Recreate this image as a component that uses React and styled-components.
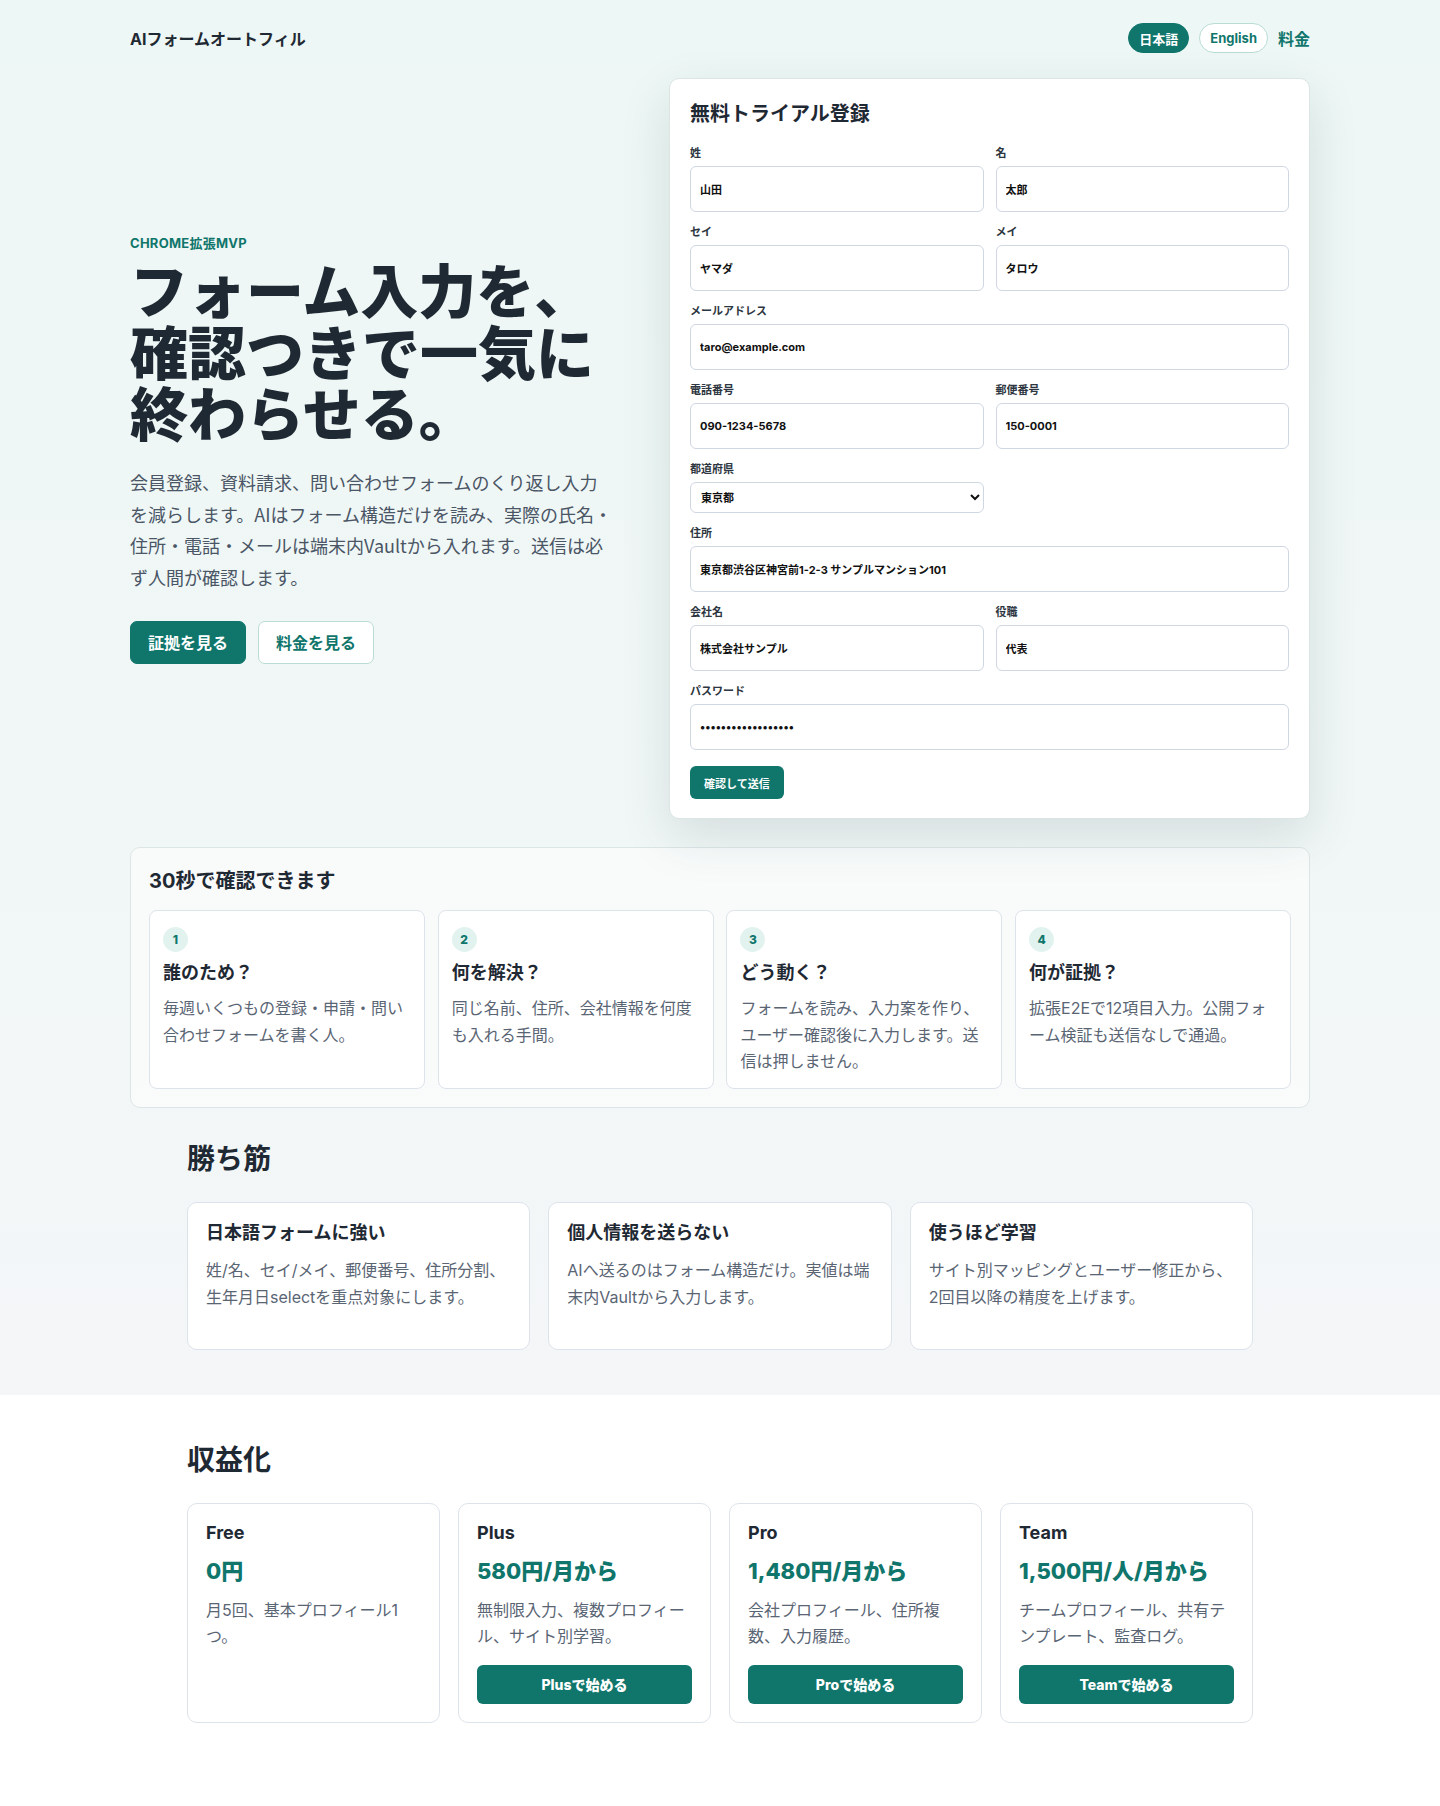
import React from 'react';
import styled, { createGlobalStyle } from 'styled-components';

const TEAL = '#10766c';
const INK = '#1f2933';

const GlobalStyle = createGlobalStyle`
  * { box-sizing: border-box; }
  body {
    margin: 0;
    font-family: Inter, "Noto Sans CJK JP", sans-serif;
    color: ${INK};
    background: #fff;
  }
`;

const Top = styled.div`
  background: linear-gradient(180deg, #edf7f5 0%, #f0f7f6 50%, #f4f6f8 100%);
  padding-bottom: 45px;
`;

const Container = styled.div`
  width: 1180px;
  margin: 0 auto;
`;

const Header = styled.header`
  display: flex;
  align-items: center;
  justify-content: space-between;
  height: 53px;
  padding-top: 23px;
`;

const Brand = styled.div`
  font-size: 16px;
  font-weight: 700;
`;

const Nav = styled.nav`
  display: flex;
  align-items: center;
  gap: 10px;
`;

const Pill = styled.a`
  display: inline-flex;
  align-items: center;
  height: 30px;
  padding: 0 10px;
  border-radius: 999px;
  font-size: 13px;
  font-weight: 700;
  text-decoration: none;
  border: 1px solid ${(p) => (p.$active ? TEAL : '#b9dcd5')};
  background: ${(p) => (p.$active ? TEAL : '#fff')};
  color: ${(p) => (p.$active ? '#fff' : TEAL)};
`;

const NavLink = styled.a`
  font-size: 16px;
  font-weight: 700;
  color: ${TEAL};
  text-decoration: none;
`;

const Hero = styled.section`
  display: grid;
  grid-template-columns: 1fr 641px;
  column-gap: 54px;
  align-items: center;
  margin-top: 25px;
`;

const Eyebrow = styled.p`
  margin: 0 0 9px;
  font-size: 13px;
  line-height: 20px;
  font-weight: 700;
  letter-spacing: 0.02em;
  color: ${TEAL};
`;

const Title = styled.h1`
  margin: 0;
  font-size: 58px;
  line-height: 1.06;
  font-weight: 800;
`;

const Lead = styled.p`
  margin: 20px 0 0;
  max-width: 485px;
  font-family: "Noto Sans CJK JP", Inter, sans-serif;
  font-size: 18px;
  line-height: 1.76;
  color: #4a5565;
`;

const Actions = styled.div`
  display: flex;
  gap: 12px;
  margin-top: 27px;
`;

const HeroButton = styled.a`
  display: inline-flex;
  align-items: center;
  height: 43px;
  padding: 0 17px;
  border-radius: 7px;
  font-size: 16px;
  font-weight: 700;
  text-decoration: none;
  border: 1px solid ${(p) => (p.$ghost ? '#b9dcd5' : TEAL)};
  background: ${(p) => (p.$ghost ? '#fff' : TEAL)};
  color: ${(p) => (p.$ghost ? TEAL : '#fff')};
`;

const FormCard = styled.form`
  background: #fff;
  border: 1px solid #dbe5e3;
  border-radius: 10px;
  padding: 22px 20px 19px;
  box-shadow: 0 18px 50px rgba(20, 70, 64, 0.13);
`;

const FormTitle = styled.h2`
  margin: 0 0 19px;
  font-size: 20px;
  line-height: 26px;
  font-weight: 700;
`;

const FieldGrid = styled.div`
  display: grid;
  grid-template-columns: 1fr 1fr;
  column-gap: 12px;
  row-gap: 13px;
`;

const Field = styled.label`
  display: flex;
  flex-direction: column;
  grid-column: ${(p) => (p.$wide ? 'span 2' : 'auto')};
`;

const FieldLabel = styled.span`
  font-size: 11px;
  line-height: 14px;
  font-weight: 700;
  color: #2d3640;
  margin-bottom: 6px;
`;

const Input = styled.input`
  height: 46px;
  padding: 0 9px;
  border: 1px solid #cfd7e2;
  border-radius: 6px;
  background: #fff;
  font-family: Inter, "Noto Sans CJK JP", sans-serif;
  font-size: 11px;
  font-weight: 700;
  color: #111;
  outline: none;
`;

const Select = styled.select`
  height: 31px;
  padding: 0 6px;
  border: 1px solid #cfd7e2;
  border-radius: 6px;
  background: #fff;
  font-family: Inter, "Noto Sans CJK JP", sans-serif;
  font-size: 11px;
  font-weight: 700;
  color: #111;
`;

const Submit = styled.button`
  margin-top: 16px;
  height: 33px;
  padding: 0 14px;
  border: 0;
  border-radius: 6px;
  background: ${TEAL};
  color: #fff;
  font-family: Inter, "Noto Sans CJK JP", sans-serif;
  font-size: 11px;
  font-weight: 700;
`;

const StepsBox = styled.section`
  margin-top: 28px;
  padding: 20px 18px 18px;
  border: 1px solid #dde6e6;
  border-radius: 10px;
  background: rgba(255, 255, 255, 0.55);
`;

const BoxTitle = styled.h2`
  margin: 0 0 16px;
  font-size: 20px;
  line-height: 26px;
  font-weight: 700;
`;

const StepGrid = styled.div`
  display: grid;
  grid-template-columns: repeat(4, 1fr);
  gap: 12.8px;
`;

const StepCard = styled.article`
  background: #fff;
  border: 1px solid #dde3ea;
  border-radius: 8px;
  padding: 16px 13px 13px;
`;

const Badge = styled.span`
  display: grid;
  place-items: center;
  width: 25px;
  height: 25px;
  border-radius: 50%;
  background: #e2f3ef;
  color: ${TEAL};
  font-size: 12px;
  font-weight: 800;
`;

const CardTitle = styled.h3`
  margin: ${(p) => (p.$step ? '9px 0 10px' : '0 0 12px')};
  font-size: 18px;
  line-height: 24px;
  font-weight: 700;
`;

const CardText = styled.p`
  margin: 0;
  font-size: 16px;
  line-height: 26.7px;
  color: #5a6574;
`;

const Section = styled.section`
  padding: 0 57px;
  margin-top: ${(p) => p.$top || 0}px;
`;

const SectionTitle = styled.h2`
  margin: 0 0 25px;
  font-size: 28px;
  line-height: 36px;
  font-weight: 700;
`;

const FeatureGrid = styled.div`
  display: grid;
  grid-template-columns: repeat(3, 1fr);
  gap: 18px;
`;

const FeatureCard = styled.article`
  background: #fff;
  border: 1px solid #dde3ea;
  border-radius: 10px;
  padding: 18px 18px 38px;
`;

const Pricing = styled.div`
  background: #fff;
  padding: 47px 0 83px;
`;

const PlanGrid = styled.div`
  display: grid;
  grid-template-columns: repeat(4, 1fr);
  gap: 18px;
`;

const PlanCard = styled.article`
  display: flex;
  flex-direction: column;
  border: 1px solid #dde3ea;
  border-radius: 10px;
  padding: 17px 18px 18px;
  background: #fff;
`;

const PlanName = styled.h3`
  margin: 0 0 12px;
  font-size: 18px;
  line-height: 24px;
  font-weight: 700;
`;

const Price = styled.div`
  margin-bottom: 12px;
  font-size: 22px;
  line-height: 28px;
  font-weight: 800;
  color: ${TEAL};
`;

const PlanText = styled(CardText)`
  margin-bottom: 15px;
`;

const PlanButton = styled.a`
  display: flex;
  align-items: center;
  justify-content: center;
  height: 39px;
  border-radius: 6px;
  background: ${TEAL};
  color: #fff;
  font-size: 14px;
  font-weight: 800;
  text-decoration: none;
`;

const fields = [
  { label: '姓', value: '山田' },
  { label: '名', value: '太郎' },
  { label: 'セイ', value: 'ヤマダ' },
  { label: 'メイ', value: 'タロウ' },
  { label: 'メールアドレス', value: 'taro@example.com', wide: true, type: 'email' },
  { label: '電話番号', value: '090-1234-5678', type: 'tel' },
  { label: '郵便番号', value: '150-0001' },
  { label: '都道府県', select: true },
  { label: '住所', value: '東京都渋谷区神宮前1-2-3 サンプルマンション101', wide: true },
  { label: '会社名', value: '株式会社サンプル' },
  { label: '役職', value: '代表' },
  { label: 'パスワード', value: 'samplepassword2024', wide: true, type: 'password' },
];

const steps = [
  { title: '誰のため？', text: '毎週いくつもの登録・申請・問い合わせフォームを書く人。' },
  { title: '何を解決？', text: '同じ名前、住所、会社情報を何度も入れる手間。' },
  { title: 'どう動く？', text: 'フォームを読み、入力案を作り、ユーザー確認後に入力します。送信は押しません。' },
  { title: '何が証拠？', text: '拡張E2Eで12項目入力。公開フォーム検証も送信なしで通過。' },
];

const features = [
  { title: '日本語フォームに強い', text: '姓/名、セイ/メイ、郵便番号、住所分割、生年月日selectを重点対象にします。' },
  { title: '個人情報を送らない', text: 'AIへ送るのはフォーム構造だけ。実値は端末内Vaultから入力します。' },
  { title: '使うほど学習', text: 'サイト別マッピングとユーザー修正から、2回目以降の精度を上げます。' },
];

const plans = [
  { name: 'Free', price: '0円', text: '月5回、基本プロフィール1つ。' },
  { name: 'Plus', price: '580円/月から', text: '無制限入力、複数プロフィール、サイト別学習。', cta: 'Plusで始める' },
  { name: 'Pro', price: '1,480円/月から', text: '会社プロフィール、住所複数、入力履歴。', cta: 'Proで始める' },
  { name: 'Team', price: '1,500円/人/月から', text: 'チームプロフィール、共有テンプレート、監査ログ。', cta: 'Teamで始める' },
];

export default function App() {
  return (
    <>
      <GlobalStyle />
      <Top>
        <Container>
          <Header>
            <Brand>AIフォームオートフィル</Brand>
            <Nav>
              <Pill $active href="#">日本語</Pill>
              <Pill href="#">English</Pill>
              <NavLink href="#pricing">料金</NavLink>
            </Nav>
          </Header>

          <Hero>
            <div>
              <Eyebrow>CHROME拡張MVP</Eyebrow>
              <Title>フォーム入力を、確認つきで一気に終わらせる。</Title>
              <Lead>
                会員登録、資料請求、問い合わせフォームのくり返し入力を減らします。AIはフォーム構造だけを読み、実際の氏名・住所・電話・メールは端末内Vaultから入れます。送信は必ず人間が確認します。
              </Lead>
              <Actions>
                <HeroButton href="#proof">証拠を見る</HeroButton>
                <HeroButton $ghost href="#pricing">料金を見る</HeroButton>
              </Actions>
            </div>

            <FormCard onSubmit={(e) => e.preventDefault()}>
              <FormTitle>無料トライアル登録</FormTitle>
              <FieldGrid>
                {fields.map((f) => (
                  <Field key={f.label} $wide={f.wide}>
                    <FieldLabel>{f.label}</FieldLabel>
                    {f.select ? (
                      <Select defaultValue="東京都">
                        <option>北海道</option>
                        <option>東京都</option>
                        <option>神奈川県</option>
                        <option>大阪府</option>
                      </Select>
                    ) : (
                      <Input type={f.type || 'text'} defaultValue={f.value} />
                    )}
                  </Field>
                ))}
              </FieldGrid>
              <Submit type="submit">確認して送信</Submit>
            </FormCard>
          </Hero>

          <StepsBox id="proof">
            <BoxTitle>30秒で確認できます</BoxTitle>
            <StepGrid>
              {steps.map((s, i) => (
                <StepCard key={s.title}>
                  <Badge>{i + 1}</Badge>
                  <CardTitle $step>{s.title}</CardTitle>
                  <CardText>{s.text}</CardText>
                </StepCard>
              ))}
            </StepGrid>
          </StepsBox>

          <Section $top={33}>
            <SectionTitle>勝ち筋</SectionTitle>
            <FeatureGrid>
              {features.map((f) => (
                <FeatureCard key={f.title}>
                  <CardTitle>{f.title}</CardTitle>
                  <CardText>{f.text}</CardText>
                </FeatureCard>
              ))}
            </FeatureGrid>
          </Section>
        </Container>
      </Top>

      <Pricing id="pricing">
        <Container>
          <Section>
            <SectionTitle>収益化</SectionTitle>
            <PlanGrid>
              {plans.map((p) => (
                <PlanCard key={p.name}>
                  <PlanName>{p.name}</PlanName>
                  <Price>{p.price}</Price>
                  <PlanText>{p.text}</PlanText>
                  {p.cta && <PlanButton href="#">{p.cta}</PlanButton>}
                </PlanCard>
              ))}
            </PlanGrid>
          </Section>
        </Container>
      </Pricing>
    </>
  );
}
